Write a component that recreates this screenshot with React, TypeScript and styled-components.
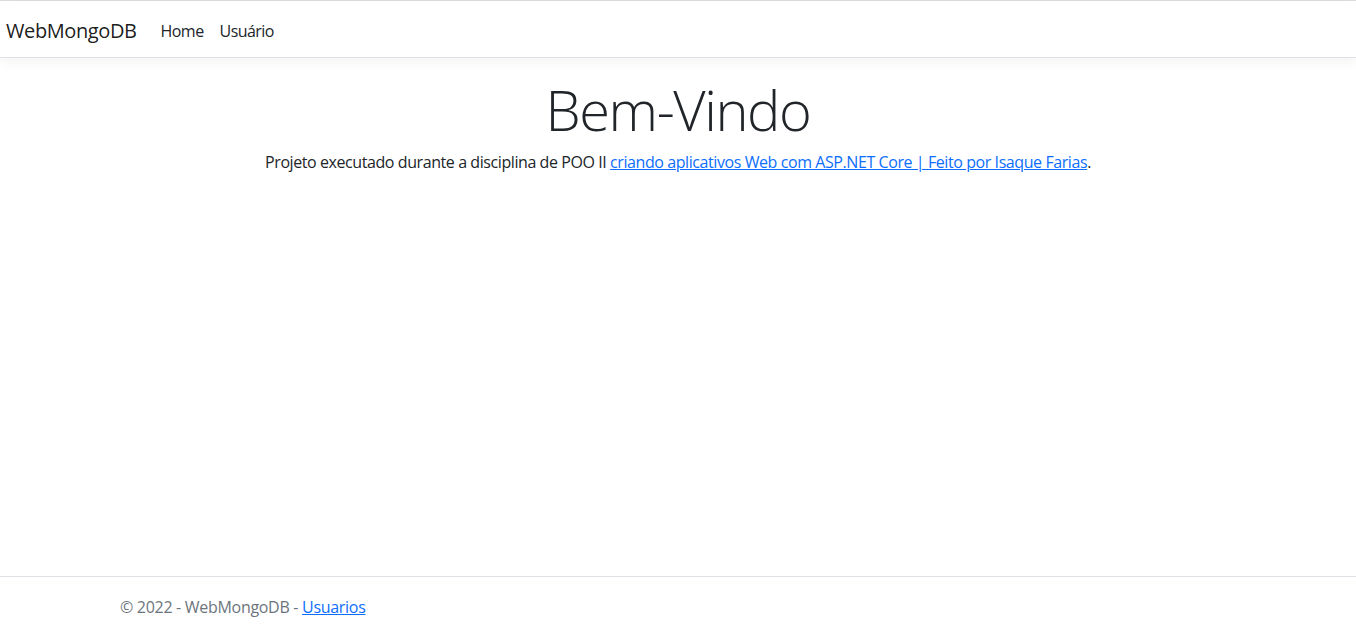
import React from "react";
import styled, { createGlobalStyle } from "styled-components";

const GlobalStyle = createGlobalStyle`
  html, body { margin: 0; padding: 0; background: #fff; }
  body {
    font-family: "Open Sans", "Noto Sans", "Liberation Sans", sans-serif;
    font-size: 16px;
    line-height: 1.5;
    color: #212529;
    letter-spacing: -0.42px;
    overflow: hidden;
  }
  * { box-sizing: border-box; }
`;

const Page = styled.div`
  display: flex;
  flex-direction: column;
  min-height: 100vh;
  border-top: 1px solid #dcdcdc;
`;

const Navbar = styled.header`
  display: flex;
  align-items: center;
  height: 57px;
  padding: 10px 6px 6px;
  background: #fff;
  border-bottom: 1px solid #dee2e6;
  box-shadow: 0 4px 12px rgba(0, 0, 0, 0.05);
`;

const Brand = styled.a`
  font-size: 20px;
  line-height: 30px;
  letter-spacing: -0.4px;
  color: rgba(0, 0, 0, 0.9);
  text-decoration: none;
  margin-right: 16px;
`;

const NavList = styled.nav`
  display: flex;
`;

const NavLink = styled.a`
  padding: 8px;
  line-height: 24px;
  color: #212529;
  letter-spacing: -0.55px;
  text-decoration: none;
`;

const Main = styled.main`
  flex: 1;
  margin-top: 18px;
  text-align: center;
`;

const Title = styled.h1`
  font-size: 56px;
  font-weight: 300;
  line-height: 1.2;
  letter-spacing: -1.4px;
  margin: 0 0 7px;
`;

const Lead = styled.p`
  margin: 0;
`;

const Link = styled.a`
  color: #0d6efd;
  text-decoration: underline;
`;

const Footer = styled.footer`
  height: 58px;
  border-top: 1px solid #dee2e6;
  line-height: 60px;
  color: #6c757d;
  padding-left: 120px;
  letter-spacing: -0.3px;
  white-space: nowrap;
`;

export default function App() {
  return (
    <>
      <GlobalStyle />
      <Page>
        <Navbar>
          <Brand href="#">WebMongoDB</Brand>
          <NavList>
            <NavLink href="#">Home</NavLink>
            <NavLink href="#">Usuário</NavLink>
          </NavList>
        </Navbar>
        <Main>
          <Title>Bem-Vindo</Title>
          <Lead>
            Projeto executado durante a disciplina de POO II{" "}
            <Link href="#">criando aplicativos Web com ASP.NET Core | Feito por Isaque Farias</Link>.
          </Lead>
        </Main>
        <Footer>
          © 2022 - WebMongoDB - <Link href="#">Usuarios</Link>
        </Footer>
      </Page>
    </>
  );
}
